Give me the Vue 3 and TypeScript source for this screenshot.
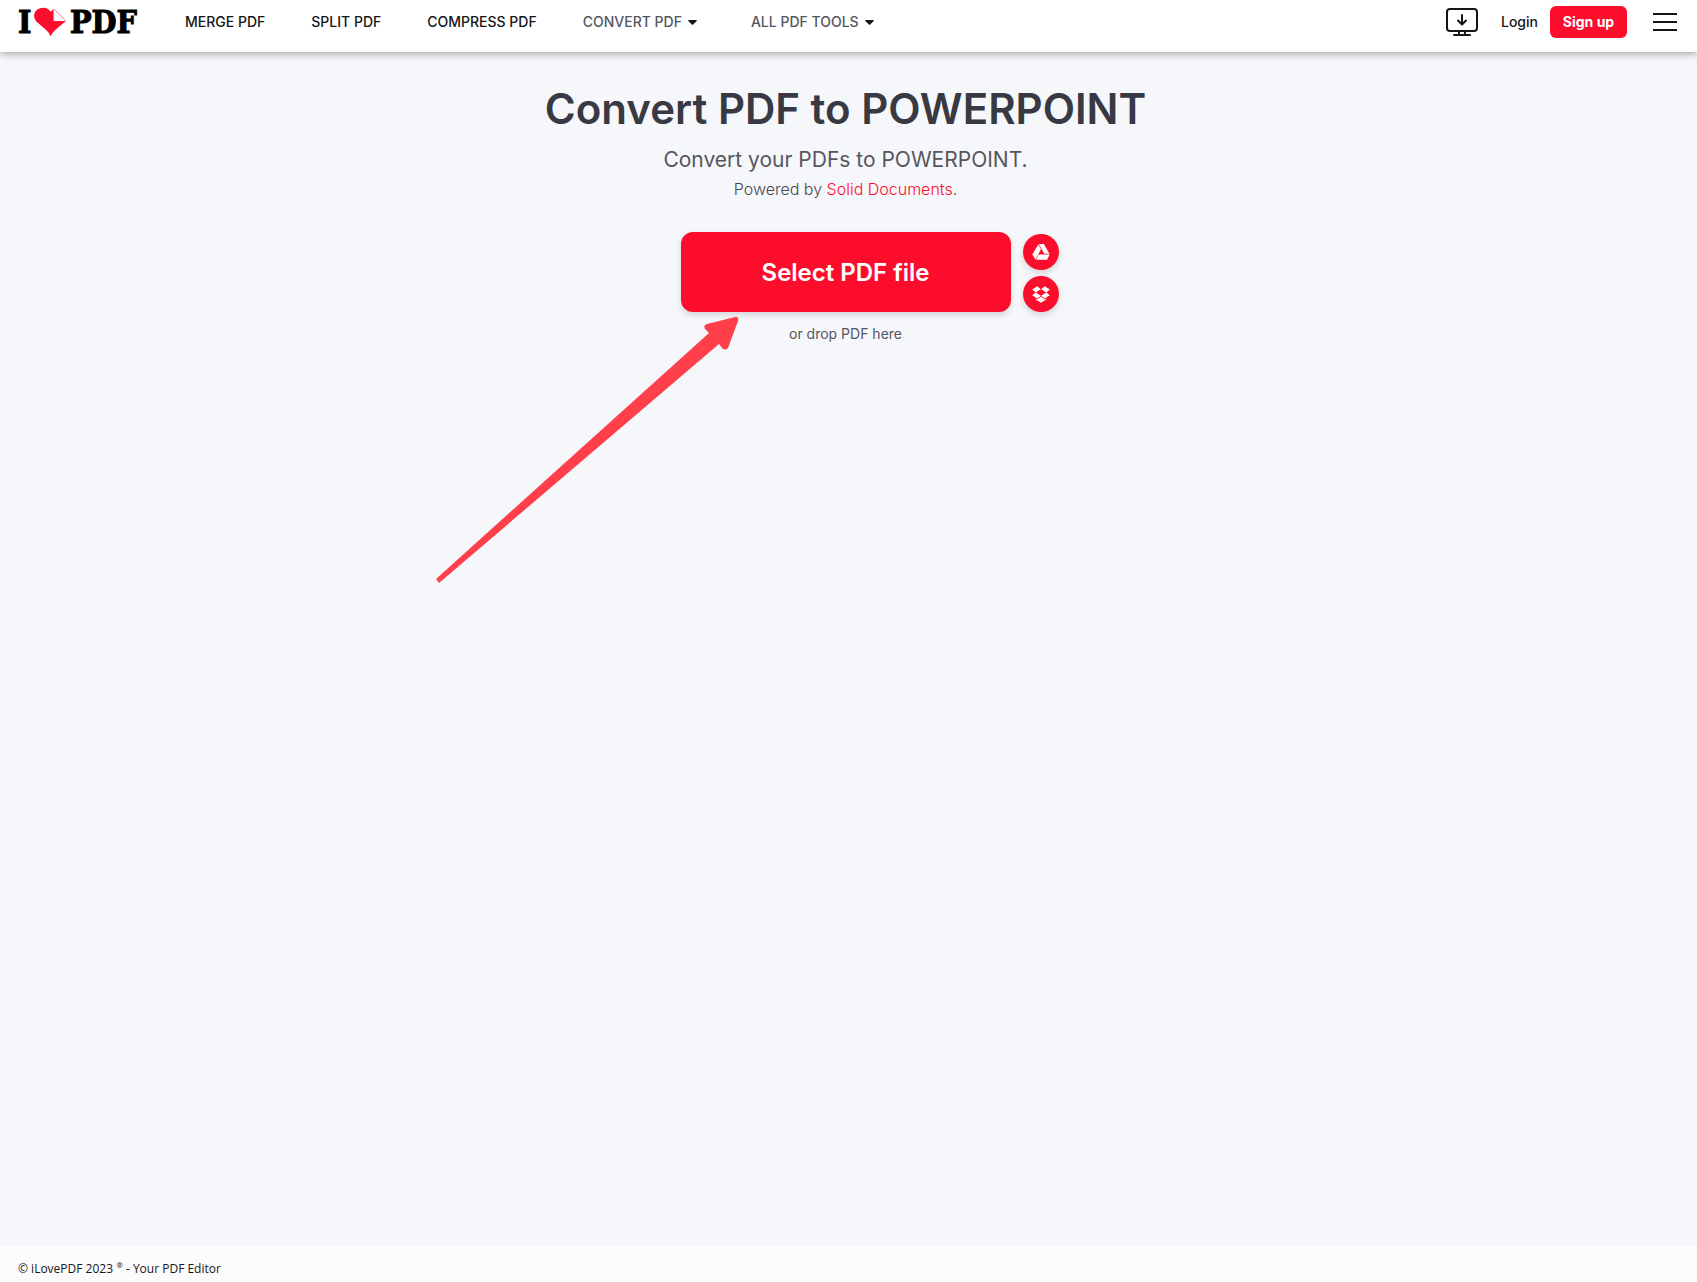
<script setup lang="ts">
interface NavItem {
  label: string
  menu?: boolean
}

const navItems: NavItem[] = [
  { label: 'MERGE PDF' },
  { label: 'SPLIT PDF' },
  { label: 'COMPRESS PDF' },
  { label: 'CONVERT PDF', menu: true },
  { label: 'ALL PDF TOOLS', menu: true },
]
</script>

<template>
  <div class="page">
    <header class="header">
      <a class="brand" href="#" aria-label="I love PDF">
        <span>I</span>
        <svg class="heart" width="36" height="30" viewBox="0 0 36 30" aria-hidden="true">
          <path
            d="M18.500 30Q17 26 13.500 23L4 15C-.5 10.500.5 3.500 6 1.200 11-1 16 .5 18.500 4.200L21.500 1.500V14H34.500L24 22.500Q20 26 18.500 30z"
            fill="#fc0d2c"
          />
          <path d="M22 1.500 34.500 13.800" stroke="#f7808f" stroke-width="1" />
        </svg>
        <span>PDF</span>
      </a>
      <nav class="nav">
        <template v-for="item in navItems" :key="item.label">
          <button v-if="item.menu" class="nav-item nav-menu" type="button">
            {{ item.label }}
            <svg width="9" height="5" viewBox="0 0 9 5" aria-hidden="true">
              <path d="M1 0h7q1.500 0 .7 1L5.200 4.500q-.7.7-1.400 0L.3 1Q-.5 0 1 0z" fill="#161616" />
            </svg>
          </button>
          <a v-else class="nav-item" href="#">{{ item.label }}</a>
        </template>
      </nav>
      <div class="actions">
        <a class="desktop" href="#" aria-label="Desktop app">
          <svg width="32" height="28" viewBox="0 0 32 28" fill="none" stroke="#161616" stroke-width="2" stroke-linecap="round" stroke-linejoin="round" aria-hidden="true">
            <rect x="1" y="1" width="30" height="22" rx="3" />
            <path d="M16 7v9M12 12.500l4 4 4-4M13 23v4M19 23v4M8 27h16" />
          </svg>
        </a>
        <a class="login" href="#">Login</a>
        <button class="signup" type="button">Sign up</button>
        <button class="burger" type="button" aria-label="Menu">
          <svg width="24" height="18" viewBox="0 0 24 18" stroke="#161616" stroke-width="2" aria-hidden="true">
            <path d="M0 1h24M0 9h24M0 17h24" />
          </svg>
        </button>
      </div>
    </header>

    <main class="main">
      <h1>Convert PDF to POWERPOINT</h1>
      <h2>Convert your PDFs to POWERPOINT.</h2>
      <p class="powered">Powered by <a href="#">Solid Documents</a>.</p>
      <div class="picker">
        <button class="select" type="button">Select PDF file</button>
        <div class="sources">
          <button class="source" type="button" aria-label="Google Drive">
            <svg width="18" height="16" viewBox="0 0 18 16" fill="#fff" aria-hidden="true">
              <path d="M6.300.5 9 5.300 3.400 15.500.3 10.500z" />
              <path d="M6.900 0h5l5.500 9.800h-5.200z" />
              <path d="M6.600 10.600h11.100L15 15.800H3.800z" />
            </svg>
          </button>
          <button class="source" type="button" aria-label="Dropbox">
            <svg width="18" height="17" viewBox="0 0 18 17" fill="#fff" aria-hidden="true">
              <path d="m5.300.3 3.500 2.900-5.100 3.200L.2 3.600zM12.700.3l5.100 3.300-3.500 2.800-5.100-3.200zM.2 9.300l3.500-2.800 5.100 3.200-3.500 2.900zM17.800 9.300l-3.500-2.800-5.100 3.200 3.500 2.900zM9 10.400l3.600 3 1.600-1v1.200L9 16.700l-5.200-3.100v-1.200l1.600 1z" />
            </svg>
          </button>
        </div>
        <svg class="arrow" width="304" height="268" viewBox="0 0 304 268" aria-hidden="true">
          <path
            d="M1 263 274 17 270 13Q268 9 272 8L300 1Q304 0 303 5L293 32Q290 35 287 32L284 28 4 267z"
            fill="#ff404b"
          />
        </svg>
      </div>
      <p class="drop">or drop PDF here</p>
    </main>

    <footer class="footer">© iLovePDF 2023 <sup>®</sup> - Your PDF Editor</footer>
  </div>
</template>

<style>
body {
  margin: 0;
}
</style>

<style scoped>
.page {
  display: flex;
  flex-direction: column;
  min-height: 100vh;
  background: #f6f7fb;
  color: #161616;
  font-family: Inter, "Liberation Sans", sans-serif;
}

a {
  color: inherit;
  text-decoration: none;
}

button {
  border: 0;
  padding: 0;
  background: none;
  color: inherit;
  font: inherit;
  cursor: pointer;
}

svg {
  display: block;
}

.header {
  display: flex;
  align-items: center;
  box-sizing: border-box;
  height: 52px;
  padding: 0 20px 8px 18px;
  background: #fff;
  box-shadow: 0 1px 8px rgba(0, 0, 0, 0.4);
}

.brand {
  display: flex;
  align-items: center;
  gap: 2px;
  width: 119px;
  margin-right: 48px;
  color: #000;
  font: bold 32px/44px "DejaVu Serif Condensed", "DejaVu Serif", serif;
  -webkit-text-stroke: 1px #000;
}

.nav {
  display: flex;
  align-items: center;
  gap: 46px;
}

.nav-item {
  font-size: 14px;
  line-height: 20px;
  font-weight: 500;
  white-space: nowrap;
}

.nav-menu {
  display: flex;
  align-items: center;
  gap: 6px;
  margin-right: 8px;
  color: #55555f;
}

.actions {
  display: flex;
  align-items: center;
  margin-left: auto;
}

.login {
  margin: 0 12px 0 23px;
  font-size: 14px;
  line-height: 20px;
  font-weight: 500;
}

.signup {
  width: 77px;
  height: 32px;
  margin-right: 26px;
  border-radius: 6px;
  background: #fc0d2c;
  color: #fff;
  font-size: 14px;
  line-height: 20px;
  font-weight: 700;
}

.main {
  display: flex;
  flex: 1;
  flex-direction: column;
  align-items: center;
  padding: 31px 6px 0 0;
  color: #55565e;
  text-align: center;
}

h1 {
  margin: 0;
  color: #383943;
  font-size: 42px;
  line-height: 52px;
  font-weight: 600;
}

h2 {
  margin: 9px 0 0;
  font-size: 21px;
  line-height: 32px;
  font-weight: 400;
}

.powered {
  margin: 0;
  color: #45464e;
  font-size: 16px;
  line-height: 26px;
  font-weight: 300;
}

.powered a {
  color: #fc0d2c;
}

.picker {
  position: relative;
  margin-top: 30px;
}

.select {
  display: block;
  width: 330px;
  height: 80px;
  border-radius: 12px;
  background: #fc0d2c;
  box-shadow: 0 3px 6px rgba(0, 0, 0, 0.14);
  color: #fff;
  font-size: 24px;
  font-weight: 600;
}

.sources {
  position: absolute;
  top: 2px;
  left: 100%;
  display: flex;
  flex-direction: column;
  gap: 6px;
  margin-left: 12px;
}

.source {
  display: flex;
  align-items: center;
  justify-content: center;
  width: 36px;
  height: 36px;
  border-radius: 50%;
  background: #fc0d2c;
  box-shadow: 0 3px 6px rgba(0, 0, 0, 0.14);
}

.arrow {
  position: absolute;
  top: 84px;
  right: 272px;
  pointer-events: none;
}

.drop {
  margin: 12px 0 0;
  font-size: 14px;
  line-height: 20px;
}

.footer {
  box-sizing: border-box;
  height: 36px;
  padding: 12px 18px 0;
  background: #fcfcfc;
  font-family: "Open Sans", "Liberation Sans", sans-serif;
  font-size: 12px;
  line-height: 22px;
}

.footer sup {
  font-size: 8px;
  line-height: 0;
}
</style>
